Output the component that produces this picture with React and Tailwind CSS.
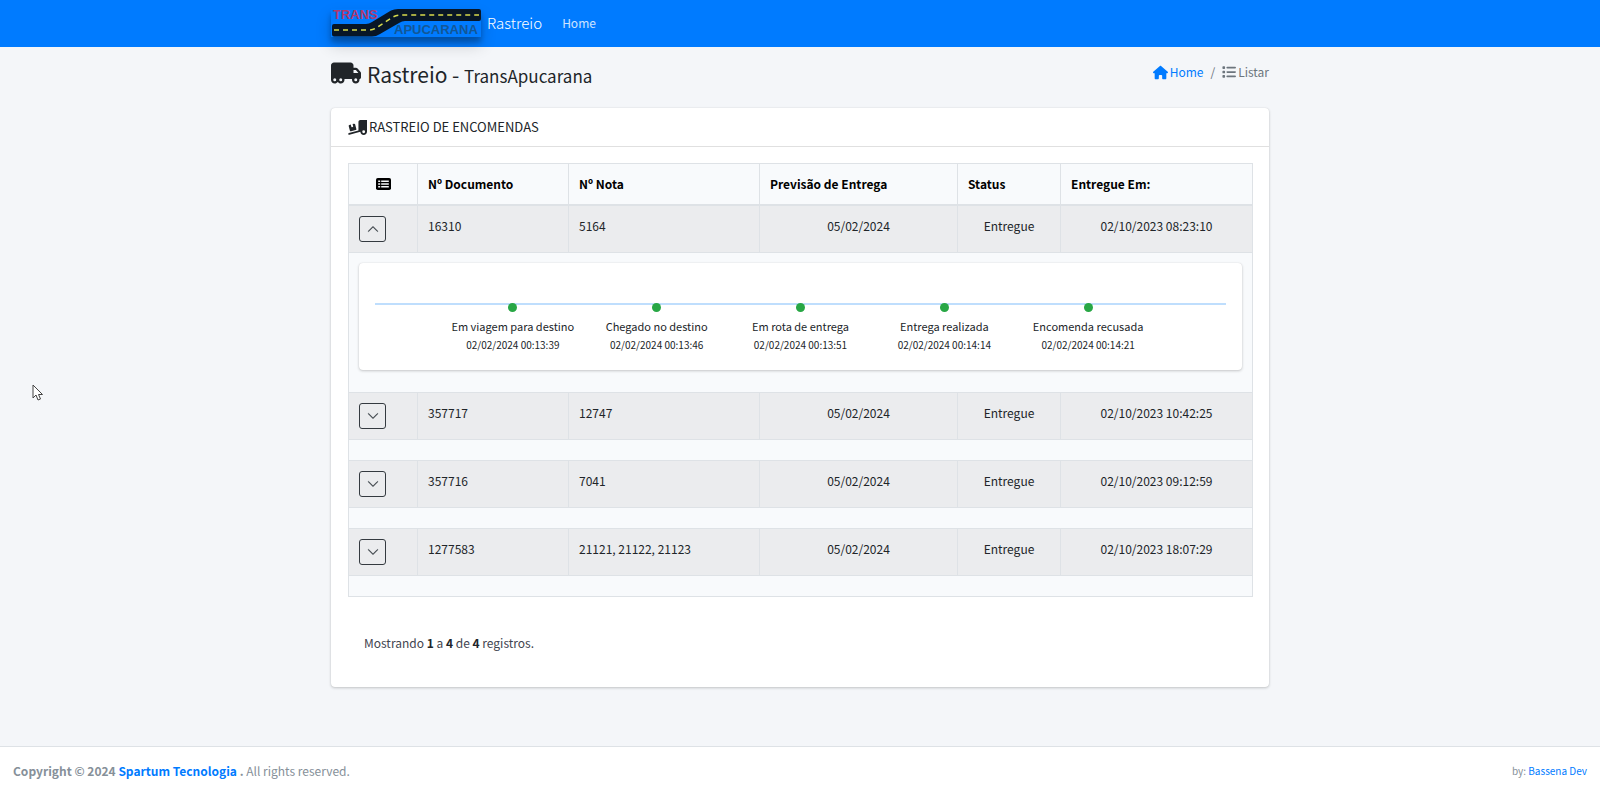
import { useState } from "react";
import { FaHouse, FaList, FaTruckMoving, FaTruckRampBox } from "react-icons/fa6";
import { BsChevronDown, BsChevronUp } from "react-icons/bs";

const shipments = [
  {
    document: "16310",
    note: "5164",
    forecast: "05/02/2024",
    status: "Entregue",
    delivered: "02/10/2023 08:23:10",
    events: [
      { label: "Em viagem para destino", date: "02/02/2024 00:13:39" },
      { label: "Chegado no destino", date: "02/02/2024 00:13:46" },
      { label: "Em rota de entrega", date: "02/02/2024 00:13:51" },
      { label: "Entrega realizada", date: "02/02/2024 00:14:14" },
      { label: "Encomenda recusada", date: "02/02/2024 00:14:21" },
    ],
  },
  { document: "357717", note: "12747", forecast: "05/02/2024", status: "Entregue", delivered: "02/10/2023 10:42:25", events: [] },
  { document: "357716", note: "7041", forecast: "05/02/2024", status: "Entregue", delivered: "02/10/2023 09:12:59", events: [] },
  { document: "1277583", note: "21121, 21122, 21123", forecast: "05/02/2024", status: "Entregue", delivered: "02/10/2023 18:07:29", events: [] },
];

function Logo() {
  return (
    <svg viewBox="0 0 150 28" className="h-7 w-[150px] overflow-visible shadow-[0_8px_16px_rgba(0,0,0,0.19),0_5px_5px_rgba(0,0,0,0.23)]" role="img" aria-label="Trans Apucarana">
      <text x="2" y="10" fontFamily="Liberation Sans, sans-serif" fontWeight="bold" fontSize="13" fill="#b0386c">TRANS</text>
      <text x="63" y="25" fontFamily="Liberation Sans, sans-serif" fontWeight="bold" fontSize="13" fill="#135796">APUCARANA</text>
      <path d="M3 15H35Q38 15 41 13L60 1.500Q63 0 67 0H148Q150 0 150 2V10Q150 12 148 12H74Q71 12 68 14L49 25Q45 27.500 41 27.500H3Q1 27.500 1 25.500V17Q1 15 3 15Z" fill="#081626" />
      <path d="M3 21H38Q42 21 45 19L62 8Q66 6 70 6H148" fill="none" stroke="#d8dc4c" strokeWidth="1.500" strokeDasharray="5 4" />
    </svg>
  );
}

function TableListIcon() {
  return (
    <svg viewBox="0 0 15 12" className="mx-auto h-3 w-[15px]" aria-hidden="true">
      <rect width="15" height="12" rx="1.800" fill="black" />
      <path d="M2.200 3.200H4.200M5.200 3.200H12.800M2.200 6H4.200M5.200 6H12.800M2.200 8.800H4.200M5.200 8.800H12.800" stroke="#f8fafc" strokeWidth="1.500" />
    </svg>
  );
}

function Timeline({ events }) {
  return (
    <div className="mb-3 rounded bg-white px-4 pb-[18px] pt-10 shadow-[0_0_1px_rgba(0,0,0,0.125),0_1px_3px_rgba(0,0,0,0.2)]">
      <div className="h-0.5 bg-[#bfdefd]" />
      <ol className="-mx-1.5 -mt-0.5 flex justify-center">
        {events.map((event) => (
          <li key={event.date} className="flex w-1/6 flex-col items-center whitespace-nowrap">
            <span className="size-[9px] rounded-full bg-[#28a745]" />
            <span className="mt-0.5 text-[11px] leading-6">{event.label}</span>
            <span className="text-[10px] leading-[14px]">{event.date}</span>
          </li>
        ))}
      </ol>
    </div>
  );
}

function ShipmentRows({ shipment, initiallyOpen }) {
  const [open, setOpen] = useState(initiallyOpen);
  const Chevron = open ? BsChevronUp : BsChevronDown;
  const cell = "border border-[#dee2e6] px-2.5 pt-2.5 align-top leading-5";
  return (
    <>
      <tr className="h-[47px] bg-[#ebecee]">
        <td className="border border-[#dee2e6] px-2.5 py-2.5 align-top">
          <button
            type="button"
            aria-label="Detalhes"
            aria-expanded={open}
            onClick={() => setOpen(!open)}
            className="flex h-[26px] w-[27px] items-center justify-center rounded-[3px] border border-[#343a40] text-[#343a40]"
          >
            <Chevron className="size-3" strokeWidth="0.5" />
          </button>
        </td>
        <td className={cell}>{shipment.document}</td>
        <td className={cell}>{shipment.note}</td>
        <td className={cell + " text-center"}>{shipment.forecast}</td>
        <td className={cell + " text-center"}>{shipment.status}</td>
        <td className={cell + " text-center"}>{shipment.delivered}</td>
      </tr>
      <tr className="bg-[#f8fafc]">
        <td colSpan={6} className="border border-[#dee2e6] px-2.5 py-2.5">
          {open && shipment.events.length > 0 && <Timeline events={shipment.events} />}
        </td>
      </tr>
    </>
  );
}

export default function App() {
  const head = "border border-b-2 border-[#dee2e6] px-2.5 text-left font-bold text-black";
  return (
    <div className="flex min-h-screen flex-col bg-[#f4f6f9] font-['Noto_Sans_CJK_SC','Source_Sans_Pro',sans-serif] text-xs text-[#212529]">
      <nav className="relative z-10 bg-[#007bff] pb-0.5">
        <div className="mx-auto flex h-[45px] w-full max-w-[938px] items-center">
          <a href="#inicio" className="flex items-center gap-1.5 text-[15px] leading-6 text-white">
            <Logo />
            <span className="font-light">Rastreio</span>
          </a>
          <a href="#home" className="ml-5 leading-6 text-white/80">Home</a>
        </div>
      </nav>

      <main className="mx-auto w-full max-w-[938px] grow">
        <header className="flex items-start justify-between pb-4 pt-[11px]">
          <h1 className="flex items-start gap-1.5 text-[21px] leading-8">
            <FaTruckMoving className="size-[30px]" />
            <span>
              Rastreio - <small className="text-[17px]">TransApucarana</small>
            </span>
          </h1>
          <ol className="flex pt-0.5 leading-6">
            <li>
              <a href="#home" className="flex items-center gap-0.5 text-[#007bff]">
                <FaHouse className="size-[15px]" />
                Home
              </a>
            </li>
            <li className="px-[7px] text-[#6c757d]">/</li>
            <li className="flex items-center gap-0.5 text-[#6c757d]">
              <FaList className="size-[14px]" />
              Listar
            </li>
          </ol>
        </header>

        <section className="rounded bg-white shadow-[0_0_1px_rgba(0,0,0,0.125),0_1px_3px_rgba(0,0,0,0.2)]">
          <h2 className="flex h-[39px] items-center gap-0.5 border-b border-black/12 px-[17px] text-[13px]">
            <FaTruckRampBox className="size-[19px]" />
            RASTREIO DE ENCOMENDAS
          </h2>
          <div className="px-[17px] pb-7 pt-4">
            <table className="w-full table-fixed border-collapse border border-[#dee2e6]">
              <colgroup>
                <col className="w-[69px]" />
                <col className="w-[151px]" />
                <col className="w-[191px]" />
                <col className="w-[198px]" />
                <col className="w-[103px]" />
                <col className="w-[192px]" />
              </colgroup>
              <thead>
                <tr className="h-[41px] bg-[#f8fafc]">
                  <th scope="col" aria-label="Detalhes" className={head}>
                    <TableListIcon />
                  </th>
                  <th scope="col" className={head}>Nº Documento</th>
                  <th scope="col" className={head}>Nº Nota</th>
                  <th scope="col" className={head}>Previsão de Entrega</th>
                  <th scope="col" className={head}>Status</th>
                  <th scope="col" className={head}>Entregue Em:</th>
                </tr>
              </thead>
              <tbody>
                {shipments.map((shipment, index) => (
                  <ShipmentRows key={shipment.document} shipment={shipment} initiallyOpen={index === 0} />
                ))}
              </tbody>
            </table>
            <p className="px-4 pb-1 pt-[34px] leading-6 text-[#3f4450]">
              Mostrando <b className="text-[#212529]">1</b> a <b className="text-[#212529]">4</b> de <b className="text-[#212529]">4</b> registros.
            </p>
          </div>
        </section>
      </main>

      <footer className="flex h-12 items-center justify-between border-t border-[#dee2e6] bg-white px-[13px] text-[#869099]">
        <p>
          <strong>
            Copyright © 2024 <a href="#spartum" className="text-[#007bff]">Spartum Tecnologia</a> .
          </strong>{" "}
          All rights reserved.
        </p>
        <p className="text-[10px]">
          by: <a href="#bassena" className="text-[#007bff]">Bassena Dev</a>
        </p>
      </footer>

      <svg viewBox="0 0 12 18" className="pointer-events-none absolute left-8 top-[384px] h-[18px] w-3" aria-hidden="true">
        <path d="M1 1V14L4 11L6 16L8.500 15L6.500 10.500H10.500Z" fill="white" stroke="#444" strokeWidth="1" />
      </svg>
    </div>
  );
}
